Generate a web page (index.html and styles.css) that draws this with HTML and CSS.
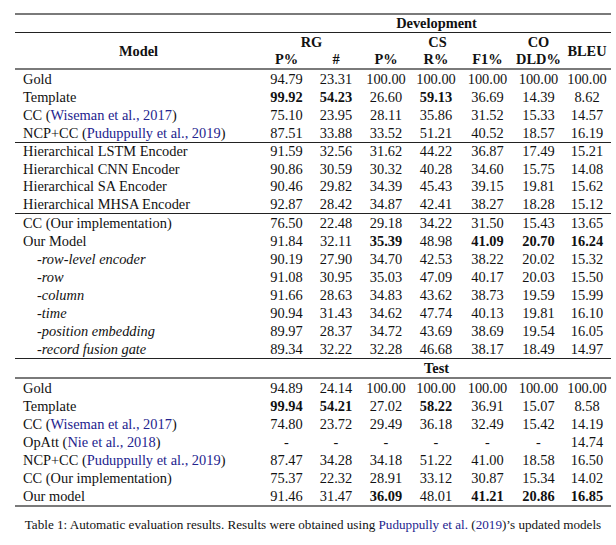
FILE: index.html
```html
<!DOCTYPE html>
<html>
<head>
<meta charset="utf-8">
<link rel="stylesheet" href="styles.css">
</head>
<body>
<div class="figure">
<table class="results">
  <colgroup>
    <col class="c-model"><col class="c-rgp"><col class="c-rgn"><col class="c-csp"><col class="c-csr"><col class="c-csf"><col class="c-co"><col class="c-bleu">
  </colgroup>
  <thead>
    <tr class="r-section top">
      <th></th>
      <th colspan="7">Development</th>
    </tr>
    <tr class="r-head1 thin">
      <th rowspan="2">Model</th>
      <th colspan="2">RG</th>
      <th colspan="3">CS</th>
      <th>CO</th>
      <th rowspan="2">BLEU</th>
    </tr>
    <tr class="r-head2">
      <th>P%</th><th>#</th><th>P%</th><th>R%</th><th>F1%</th><th>DLD%</th>
    </tr>
  </thead>
  <tbody>
    <tr class="mid"><td>Gold</td><td>94.79</td><td>23.31</td><td>100.00</td><td>100.00</td><td>100.00</td><td>100.00</td><td>100.00</td></tr>
    <tr><td>Template</td><td class="b">99.92</td><td class="b">54.23</td><td>26.60</td><td class="b">59.13</td><td>36.69</td><td>14.39</td><td>8.62</td></tr>
    <tr><td>CC (<span class="cite">Wiseman et al., 2017</span>)</td><td>75.10</td><td>23.95</td><td>28.11</td><td>35.86</td><td>31.52</td><td>15.33</td><td>14.57</td></tr>
    <tr><td>NCP+CC (<span class="cite">Puduppully et al., 2019</span>)</td><td>87.51</td><td>33.88</td><td>33.52</td><td>51.21</td><td>40.52</td><td>18.57</td><td>16.19</td></tr>
    <tr class="thin tight"><td>Hierarchical LSTM Encoder</td><td>91.59</td><td>32.56</td><td>31.62</td><td>44.22</td><td>36.87</td><td>17.49</td><td>15.21</td></tr>
    <tr class="tight"><td>Hierarchical CNN Encoder</td><td>90.86</td><td>30.59</td><td>30.32</td><td>40.28</td><td>34.60</td><td>15.75</td><td>14.08</td></tr>
    <tr class="tight"><td>Hierarchical SA Encoder</td><td>90.46</td><td>29.82</td><td>34.39</td><td>45.43</td><td>39.15</td><td>19.81</td><td>15.62</td></tr>
    <tr class="tight"><td>Hierarchical MHSA Encoder</td><td>92.87</td><td>28.42</td><td>34.87</td><td>42.41</td><td>38.27</td><td>18.28</td><td>15.12</td></tr>
    <tr class="thin"><td>CC (Our implementation)</td><td>76.50</td><td>22.48</td><td>29.18</td><td>34.22</td><td>31.50</td><td>15.43</td><td>13.65</td></tr>
    <tr><td>Our Model</td><td>91.84</td><td>32.11</td><td class="b">35.39</td><td>48.98</td><td class="b">41.09</td><td class="b">20.70</td><td class="b">16.24</td></tr>
    <tr><td class="abl">-row-level encoder</td><td>90.19</td><td>27.90</td><td>34.70</td><td>42.53</td><td>38.22</td><td>20.02</td><td>15.32</td></tr>
    <tr><td class="abl">-row</td><td>91.08</td><td>30.95</td><td>35.03</td><td>47.09</td><td>40.17</td><td>20.03</td><td>15.50</td></tr>
    <tr><td class="abl">-column</td><td>91.66</td><td>28.63</td><td>34.83</td><td>43.62</td><td>38.73</td><td>19.59</td><td>15.99</td></tr>
    <tr><td class="abl">-time</td><td>90.94</td><td>31.43</td><td>34.62</td><td>47.74</td><td>40.13</td><td>19.81</td><td>16.10</td></tr>
    <tr><td class="abl">-position embedding</td><td>89.97</td><td>28.37</td><td>34.72</td><td>43.69</td><td>38.69</td><td>19.54</td><td>16.05</td></tr>
    <tr><td class="abl">-record fusion gate</td><td>89.34</td><td>32.22</td><td>32.28</td><td>46.68</td><td>38.17</td><td>18.49</td><td>14.97</td></tr>
    <tr class="r-section thin"><th></th><th colspan="7">Test</th></tr>
    <tr class="mid"><td>Gold</td><td>94.89</td><td>24.14</td><td>100.00</td><td>100.00</td><td>100.00</td><td>100.00</td><td>100.00</td></tr>
    <tr><td>Template</td><td class="b">99.94</td><td class="b">54.21</td><td>27.02</td><td class="b">58.22</td><td>36.91</td><td>15.07</td><td>8.58</td></tr>
    <tr><td>CC (<span class="cite">Wiseman et al., 2017</span>)</td><td>74.80</td><td>23.72</td><td>29.49</td><td>36.18</td><td>32.49</td><td>15.42</td><td>14.19</td></tr>
    <tr><td>OpAtt (<span class="cite">Nie et al., 2018</span>)</td><td>-</td><td>-</td><td>-</td><td>-</td><td>-</td><td>-</td><td>14.74</td></tr>
    <tr><td>NCP+CC (<span class="cite">Puduppully et al., 2019</span>)</td><td>87.47</td><td>34.28</td><td>34.18</td><td>51.22</td><td>41.00</td><td>18.58</td><td>16.50</td></tr>
    <tr><td>CC (Our implementation)</td><td>75.37</td><td>22.32</td><td>28.91</td><td>33.12</td><td>30.87</td><td>15.34</td><td>14.02</td></tr>
    <tr class="last"><td>Our model</td><td>91.46</td><td>31.47</td><td class="b">36.09</td><td>48.01</td><td class="b">41.21</td><td class="b">20.86</td><td class="b">16.85</td></tr>
  </tbody>
</table>
<p class="caption">Table 1: Automatic evaluation results. Results were obtained using <span class="cite">Puduppully et al.</span> (<span class="cite">2019</span>)’s updated models</p>
</div>
</body>
</html>
```

FILE: styles.css
```css
html, body {
  margin: 0;
  padding: 0;
  background: #ffffff;
}

.figure {
  padding: 13px 0 0 15px;
  font-family: "Liberation Serif", "Times New Roman", serif;
  color: #111111;
}

.results {
  border-collapse: collapse;
  table-layout: fixed;
  width: 596px;
  font-size: 14.4px;
}

.c-model { width: 247px; }
.c-rgp { width: 49px; }
.c-rgn { width: 50px; }
.c-csp { width: 50px; }
.c-csr { width: 50px; }
.c-csf { width: 53px; }
.c-co { width: 49px; }
.c-bleu { width: 48px; }

.results td,
.results th {
  padding: 0;
  height: 18px;
  line-height: 18px;
  text-align: center;
  white-space: nowrap;
  vertical-align: middle;
}

.results th {
  font-weight: bold;
}

.results td:first-child {
  text-align: left;
  padding-left: 8px;
}

.results td.abl {
  padding-left: 22px;
  font-style: italic;
}

.results td.b {
  font-weight: bold;
}

.results tr.tight > td {
  height: 17.5px;
  line-height: 17.5px;
}

.results .top th {
  border-top: 2px solid #7a7a7a;
  height: 17px;
  line-height: 17px;
}

.results .r-head2 th {
  height: 17px;
  line-height: 17px;
}

.results tr.thin > * {
  border-top: 1px solid #222222;
}

.results tr.mid > * {
  border-top: 2px solid #7a7a7a;
}

.results tr.last > * {
  border-bottom: 2px solid #7a7a7a;
}

.cite {
  color: #23238e;
}

.caption {
  margin: 10px 0 0 0;
  width: 596px;
  text-align: center;
  font-size: 13.15px;
  line-height: 16px;
}
```
